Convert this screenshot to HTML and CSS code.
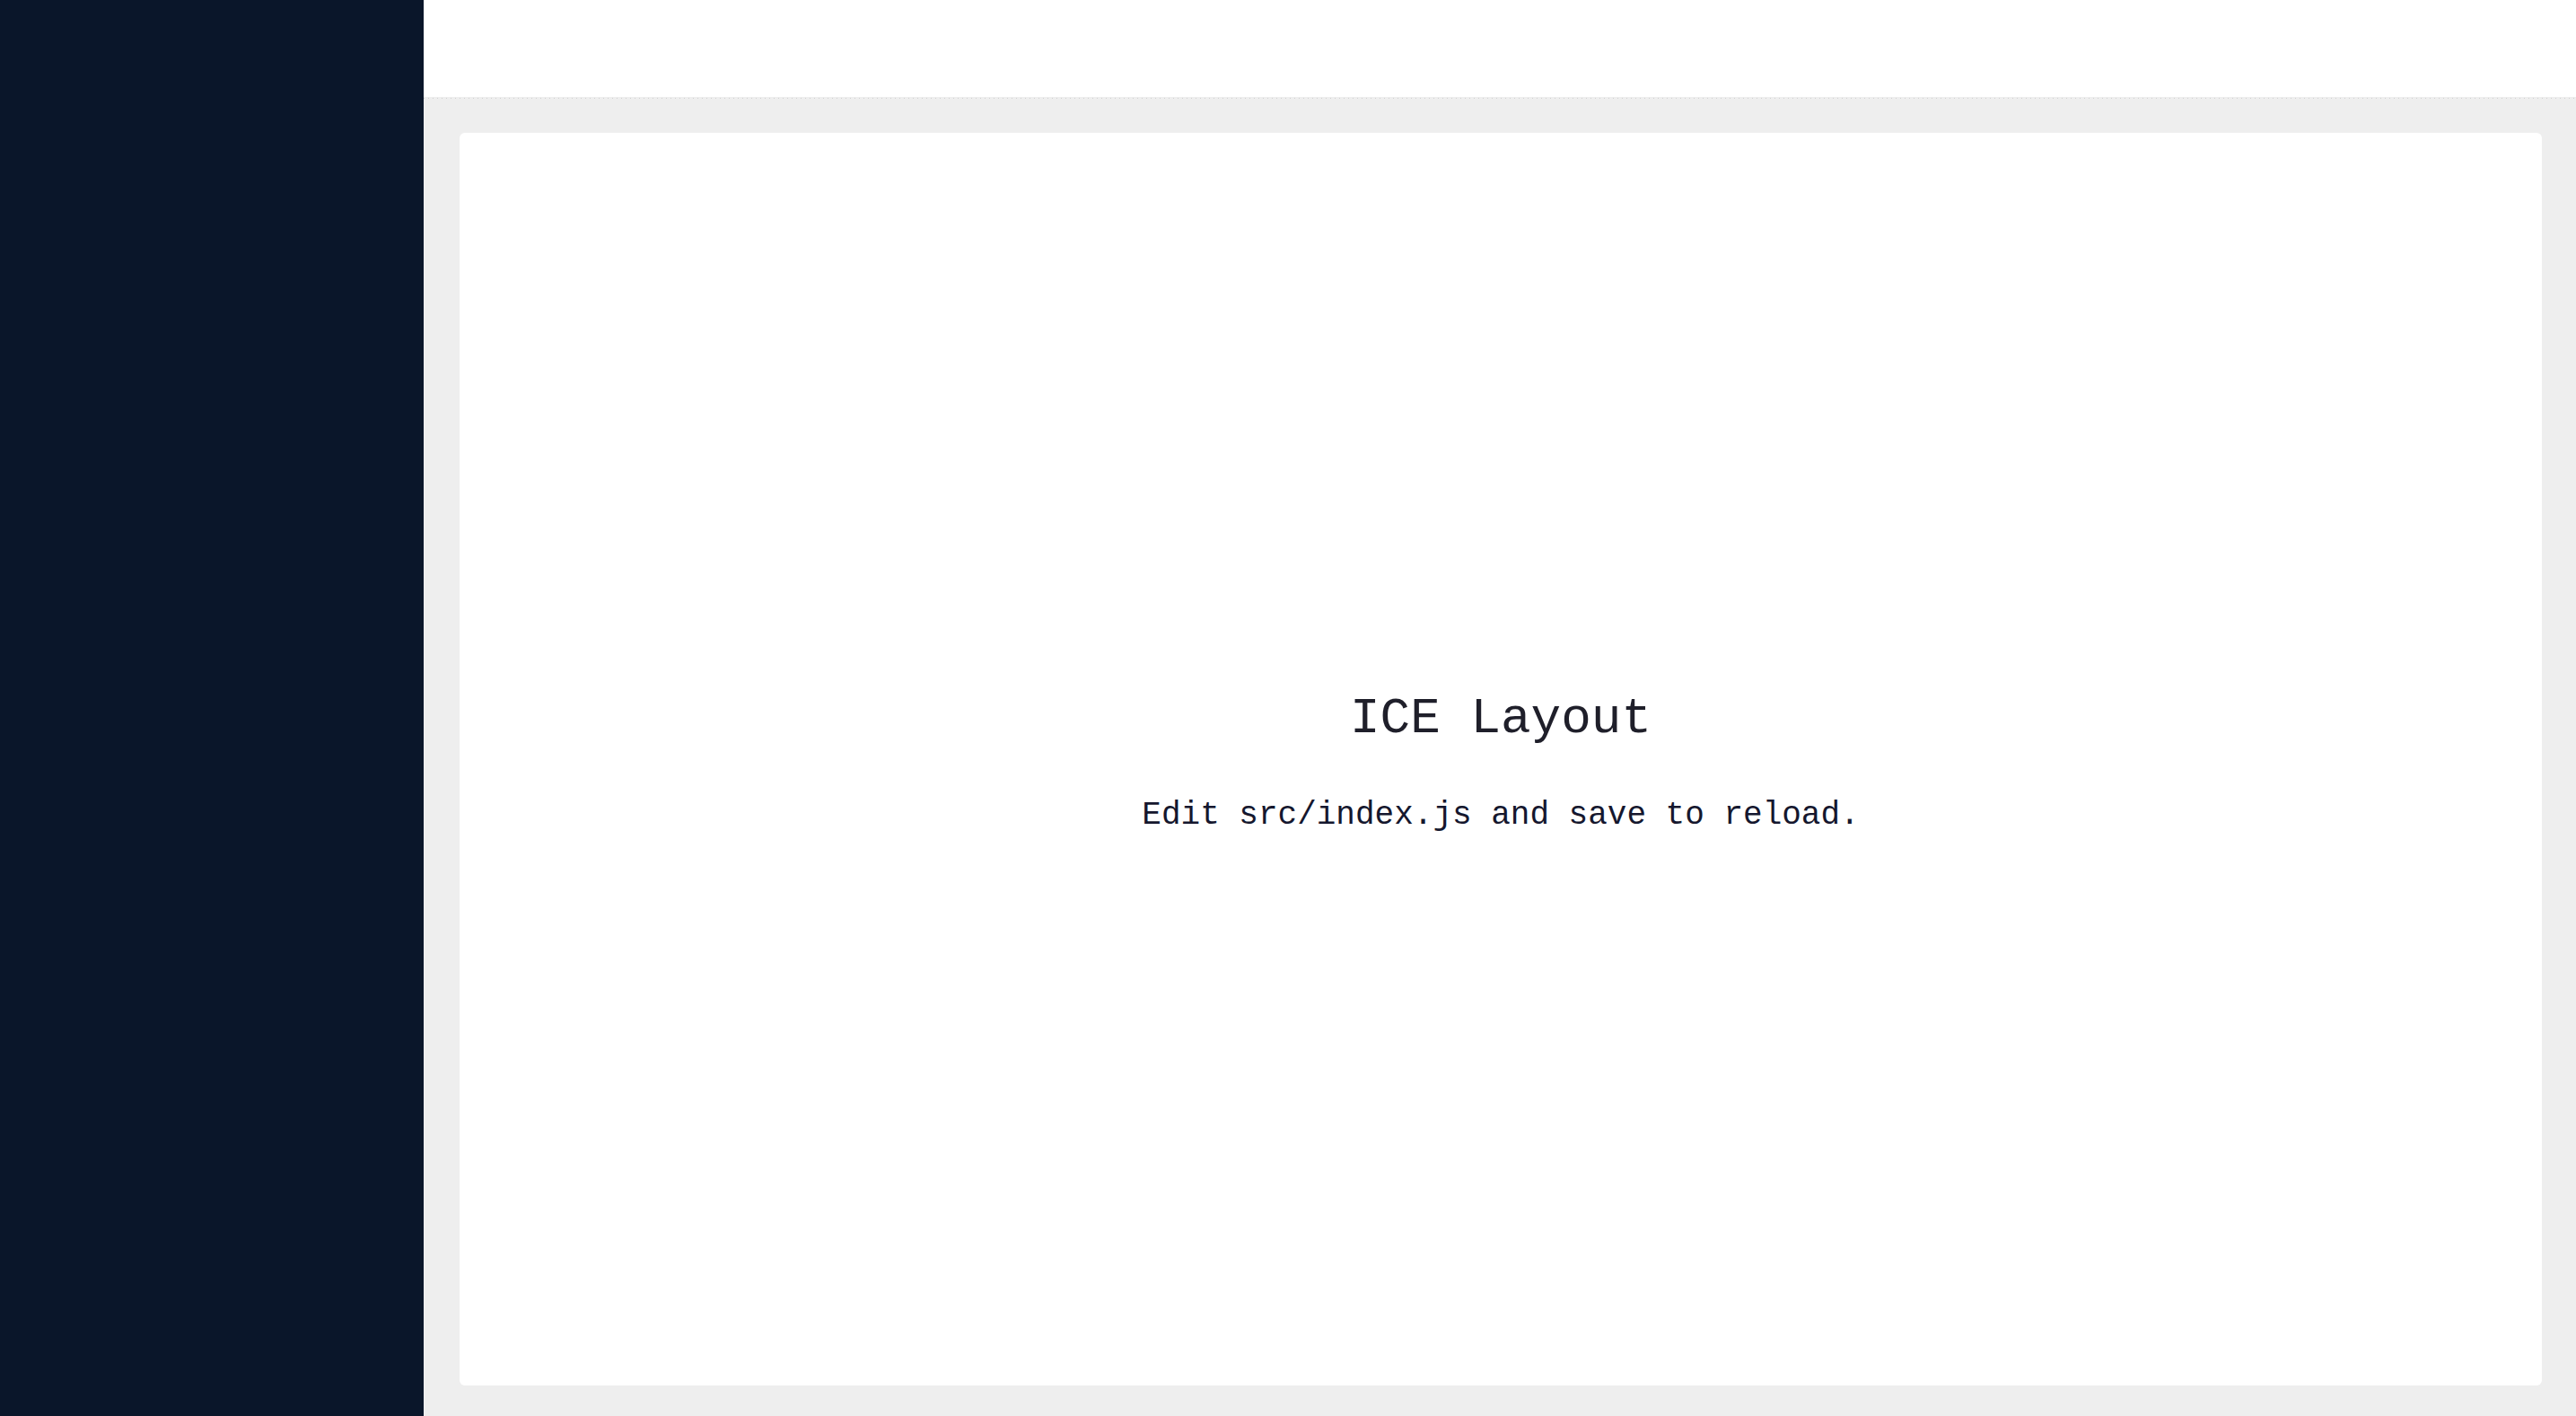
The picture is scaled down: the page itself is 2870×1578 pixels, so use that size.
FILE: index.html
```html
<!DOCTYPE html>
<html>
<head>
<meta charset="utf-8">
<link rel="stylesheet" href="styles.css">
</head>
<body>
<div class="layout">
  <aside class="sidebar"></aside>
  <div class="main">
    <header class="header"></header>
    <div class="content">
      <div class="card">
        <h1 class="title">ICE Layout</h1>
        <p class="desc">Edit src/index.js and save to reload.</p>
      </div>
    </div>
  </div>
</div>
</body>
</html>
```
FILE: styles.css
```css
html, body {
  margin: 0;
  padding: 0;
  height: 100%;
}
body {
  font-family: "Liberation Mono", "Courier New", monospace;
}
.layout {
  display: flex;
  height: 100vh;
}
.sidebar {
  width: 472px;
  flex: none;
  background: #0a162a;
}
.main {
  flex: 1;
  display: flex;
  flex-direction: column;
}
.header {
  height: 108px;
  flex: none;
  background: #fff;
}
.content {
  flex: 1;
  padding: 40px 38px 34px 40px;
  background:
    repeating-linear-gradient(to right, #cfcfcf 0 1px, transparent 1px 5px) 0 1px / 100% 1px no-repeat,
    #eeeeee;
  display: flex;
}
.card {
  flex: 1;
  background: #fff;
  border-radius: 6px;
  display: flex;
  flex-direction: column;
  align-items: center;
  justify-content: center;
  padding-top: 8px;
}
.title {
  margin: 0;
  font-size: 56px;
  font-weight: normal;
  line-height: 64px;
  color: #1f1f2a;
}
.desc {
  margin: 54px 0 0;
  font-size: 36px;
  line-height: 44px;
  color: #15172e;
}
```
